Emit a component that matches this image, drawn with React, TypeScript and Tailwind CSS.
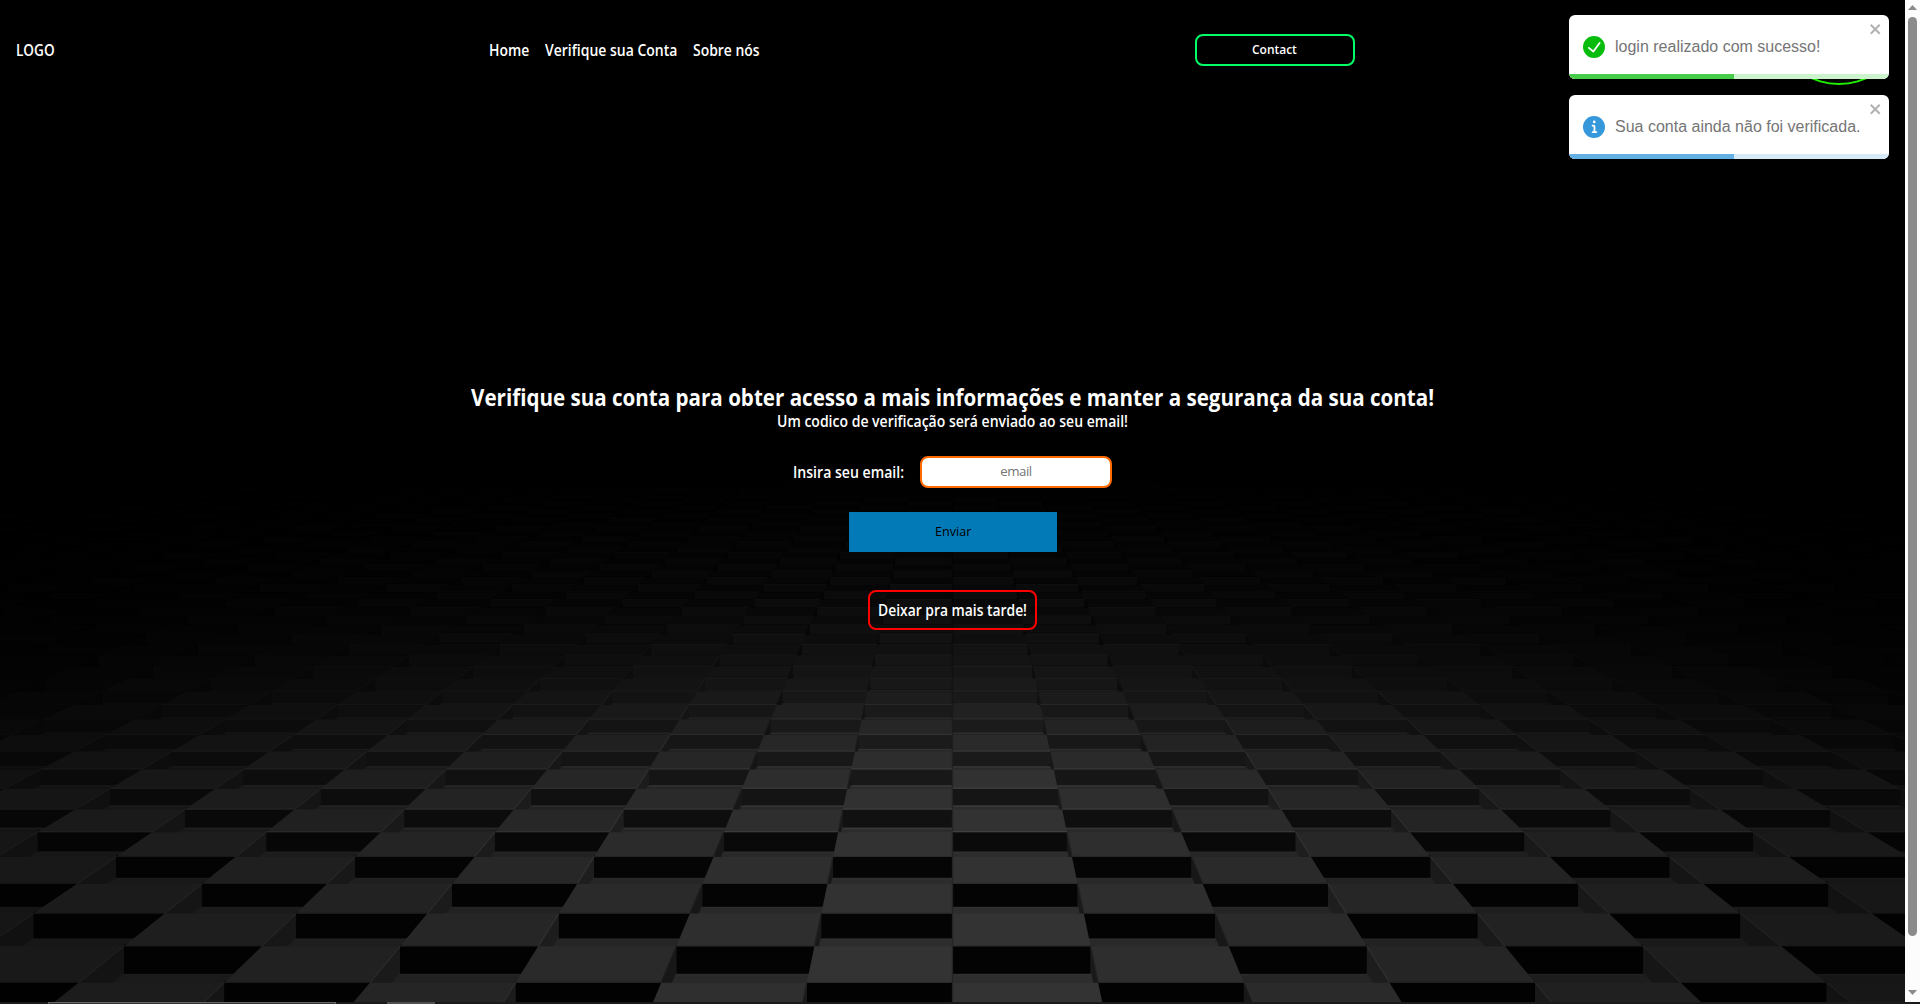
import { useLayoutEffect, useRef, useState } from 'react';
import type { ReactNode } from 'react';

const HORIZON = 282;
const CENTER = 952.5;
const DEPTH = 12809;
const NEAR = 18.28;

const rowY = (r: number) => HORIZON + DEPTH / (NEAR + r);
const colX = (c: number, y: number) => CENTER + c * 0.2079 * (y - HORIZON);
const faceHeight = (y: number) =>
  (y - HORIZON) * Math.min(0.042, Math.max(0.024, 0.031 + (y - 752) * 0.0000518));

const ramp = (v: number, stops: [number, number][]) => {
  if (v <= stops[0][0]) return stops[0][1];
  for (let i = 1; i < stops.length; i++) {
    if (v <= stops[i][0]) {
      const [a, p] = stops[i - 1];
      const [b, q] = stops[i];
      return p + ((q - p) * (v - a)) / (b - a);
    }
  }
  return stops[stops.length - 1][1];
};

const TOP: [number, number][] = [[450, 0], [520, 2], [560, 5], [600, 8], [640, 15], [680, 25], [710, 34], [740, 43], [780, 51], [1004, 54]];
const FACE: [number, number][] = [[450, 0], [520, 4], [560, 8], [600, 13], [640, 19], [680, 25], [720, 28], [760, 27], [800, 20], [830, 11], [860, 5], [1004, 2]];
const SIDE: [number, number][] = [[450, 0], [560, 4], [640, 14], [720, 32], [800, 46], [1004, 49]];

const gray = (v: number, x: number, y: number) => {
  const d = Math.abs(x - CENTER) / 952;
  const fall = Math.min(1, Math.max(0.58, 0.58 + (840 - y) * 0.002));
  const g = Math.max(0, Math.round(v * Math.max(0.14, 1 - fall * d + 0.04 * d * d)));
  return `rgb(${g},${g},${g})`;
};

function Floor() {
  const shapes: ReactNode[] = [];
  for (let r = 50; r >= -2; r--) {
    const y0 = rowY(r);
    const y1 = rowY(r + 1);
    const h0 = faceHeight(y0);
    const h1 = faceHeight(y1);
    const span = Math.ceil(980 / (0.2079 * (y1 - HORIZON))) + 1;
    const faces: ReactNode[] = [];
    const tops: ReactNode[] = [];
    for (let c = -span; c < span; c++) {
      const a = colX(c, y0);
      const b = colX(c + 1, y0);
      const d = colX(c + 1, y1);
      const e = colX(c, y1);
      const mid = (a + b) / 2;
      const k = `${r}:${c}`;
      const shade = (v: number) => gray(v, mid, y0);
      if ((r + c) % 2 === 0) {
        shapes.push(
          <g key={`f${k}`}>
            <polygon fill={shade(ramp(y0, TOP) * 0.88)} points={`${e},${y1 + h1} ${d},${y1 + h1} ${b},${y0 + h0} ${a},${y0 + h0}`} />
            <line x1={e} y1={y1 + h1 + 1} x2={d} y2={y1 + h1 + 1} stroke={shade(ramp(y0, TOP) * (y0 < 840 ? 1.15 : 0.95))} strokeWidth={1.5} />
          </g>,
        );
        continue;
      }
      const left = c < 0;
      const [sx0, sx1] = left ? [b, d] : [a, e];
      const nearAxis = Math.abs(c + 0.5) < 3;
      faces.push(
        <g key={`s${k}`}>
          <polygon fill={shade(ramp(y0, SIDE) * (nearAxis ? 0.6 : 0.85))} points={`${sx0},${y0} ${sx1},${y1} ${sx1},${y1 + h1} ${sx0},${y0 + h0}`} />
          <line x1={sx0} y1={y0 + h0} x2={sx1} y2={y1 + h1} stroke={shade(ramp(y0, SIDE) * 1.1)} strokeWidth={1.4} />
          <rect x={a} y={y0 - 2} width={b - a} height={h0 + 2} rx={2} fill={shade(ramp(y0, FACE))} />
        </g>,
      );
      const edge = ramp(y0, TOP);
      tops.push(
        <g key={`t${k}`}>
          <polygon fill={shade(ramp((y0 + y1) / 2, TOP))} points={`${e},${y1} ${d},${y1} ${b},${y0} ${a},${y0}`} />
          <line x1={sx0} y1={y0} x2={sx1} y2={y1} stroke={shade(edge * (nearAxis ? 0.7 : 1.25))} strokeWidth={1.3} />
          <line x1={a} y1={y0 - 0.5} x2={b} y2={y0 - 0.5} stroke={shade(y0 < 840 ? Math.max(edge, ramp(y0, FACE)) * 1.35 : edge * 0.85)} strokeWidth={1} />
        </g>,
      );
    }
    shapes.push(...faces, ...tops);
  }
  return (
    <svg className="absolute inset-0 h-full w-full" viewBox="0 0 1905 1002" preserveAspectRatio="none">
      {shapes}
    </svg>
  );
}

/** Condenses a line of text horizontally until it fills its box. */
function Fit({ className, children }: { className: string; children: string }) {
  const box = useRef<HTMLSpanElement>(null);
  const text = useRef<HTMLSpanElement>(null);
  const [scale, setScale] = useState(1);
  useLayoutEffect(() => {
    if (box.current && text.current) setScale(box.current.offsetWidth / text.current.offsetWidth);
  }, [children]);
  return (
    <span ref={box} className={`block whitespace-nowrap text-left ${className}`}>
      <span ref={text} className="inline-block origin-left" style={{ transform: `scaleX(${scale})` }}>
        {children}
      </span>
    </span>
  );
}

const ICONS = {
  success:
    'M12 0a12 12 0 1012 12A12.014 12.014 0 0012 0zm6.927 8.2l-6.845 9.289a1.011 1.011 0 01-1.43.188l-4.888-3.908a1 1 0 111.25-1.562l4.076 3.261 6.227-8.451a1 1 0 111.61 1.183z',
  info: 'M12 0a12 12 0 1012 12A12.013 12.013 0 0012 0zm.25 5a1.5 1.5 0 11-1.5 1.5 1.5 1.5 0 011.5-1.5zm2.25 13.5h-4a1 1 0 010-2h.75a.25.25 0 00.25-.25v-4.5a.25.25 0 00-.25-.25h-.75a1 1 0 010-2h1a2 2 0 012 2v4.75a.25.25 0 00.25.25h.75a1 1 0 110 2z',
};

function Toast({ kind, children }: { kind: 'success' | 'info'; children: string }) {
  const ok = kind === 'success';
  return (
    <div className="relative flex h-16 w-80 items-center overflow-hidden rounded-md bg-white pl-[14px] font-['Liberation_Sans',Arial,sans-serif]">
      <svg viewBox="0 0 24 24" className={`mr-[10px] size-[22px] ${ok ? 'fill-[#07bc0c]' : 'fill-[#3498db]'}`}>
        <path d={ICONS[kind]} />
      </svg>
      <span className="text-base leading-5 whitespace-nowrap text-[#757575]">{children}</span>
      <svg viewBox="0 0 14 16" className="absolute top-[6px] right-[6px] h-4 w-[14px] fill-[#b2b2b2]">
        <path d="M7.71 8.23l3.75 3.75-1.48 1.48-3.75-3.75-3.75 3.75L1 11.98l3.75-3.75L1 4.48 2.48 3l3.75 3.75L9.98 3l1.48 1.48-3.75 3.75z" />
      </svg>
      <div className={`absolute inset-x-0 bottom-0 h-[5px] ${ok ? 'bg-[#cdf2ce]' : 'bg-[#d6eaf8]'}`}>
        <div className={`h-full w-[165px] ${ok ? 'bg-[#45cd49]' : 'bg-[#62b0e4]'}`} />
      </div>
    </div>
  );
}

export default function App() {
  return (
    <div className="relative flex h-[1004px] w-[1920px] flex-col overflow-hidden bg-black font-['Open_Sans','Noto_Sans',sans-serif] font-semibold text-white">
      <div className="flex h-[1002px]">
        <div className="relative flex w-[1905px] flex-col overflow-hidden">
          <Floor />
          <header className="relative flex h-[100px] items-center justify-between px-4 text-base">
            <Fit className="w-[39px]">LOGO</Fit>
            <nav className="flex gap-4">
              <a><Fit className="w-[40px]">Home</Fit></a>
              <a><Fit className="w-[132px]">Verifique sua Conta</Fit></a>
              <a><Fit className="w-[67px]">Sobre nós</Fit></a>
            </nav>
            <button className="flex h-8 w-40 items-center justify-center rounded-lg border-2 border-[#00ff66] text-[13.3px]">
              <Fit className="w-[45px]">Contact</Fit>
            </button>
            <div className="h-[70px] w-[100px] rounded-[50%] border-2 border-[#22ee00]" />
          </header>
          <main className="relative flex flex-col items-center pt-[282px]">
            <h1 className="h-[30px] text-2xl leading-[29px] font-bold">
              <Fit className="w-[963px]">
                Verifique sua conta para obter acesso a mais informações e manter a segurança da sua conta!
              </Fit>
            </h1>
            <p className="h-5 text-base leading-[19px]">
              <Fit className="w-[351px]">Um codico de verificação será enviado ao seu email!</Fit>
            </p>
            <div className="mt-6 flex w-[319px] items-center justify-between text-base">
              <label><Fit className="w-[111px]">Insira seu email:</Fit></label>
              <input
                placeholder="email"
                className="h-8 w-48 rounded-lg border-2 border-[#ff6a00] bg-white pb-0.5 text-center text-[13.3px] font-normal tracking-[-0.5px] placeholder:text-[#757575]"
              />
            </div>
            <button className="mt-6 flex h-10 w-52 items-center justify-center bg-[#027ab7] text-[13.3px] font-medium text-black">
              <Fit className="w-[36px]">Enviar</Fit>
            </button>
            <button className="mt-[38px] flex h-10 w-[169px] items-center justify-center rounded-lg border-2 border-[#ff0000] text-base">
              <Fit className="w-[149px]">Deixar pra mais tarde!</Fit>
            </button>
          </main>
        </div>
        <div className="flex w-[15px] flex-col items-center bg-[#fcfcfc]">
          <svg viewBox="0 0 15 17" className="h-[17px] w-[15px] fill-[#8b8b8b]">
            <path d="M3 10h9L7.5 5z" />
          </svg>
          <div className="h-[919px] w-[9px] rounded-full bg-[#8b8b8b]" />
          <svg viewBox="0 0 15 17" className="mt-auto h-[17px] w-[15px] fill-[#8b8b8b]">
            <path d="M3 5h9l-4.5 5z" />
          </svg>
        </div>
      </div>
      <div className="flex h-[2px] bg-[#1c191b] pl-12">
        <div className="w-72 border-x border-t border-[#666] bg-[#333]" />
        <div className="ml-[51px] w-12 bg-[#505050]" />
      </div>
      <div className="absolute top-[15px] left-[1569px] flex flex-col gap-4 font-normal">
        <Toast kind="success">login realizado com sucesso!</Toast>
        <Toast kind="info">Sua conta ainda não foi verificada.</Toast>
      </div>
    </div>
  );
}
